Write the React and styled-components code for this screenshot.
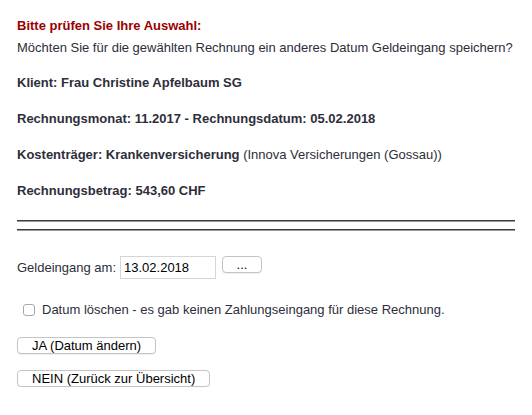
import React from "react";
import styled, { createGlobalStyle } from "styled-components";

const GlobalStyle = createGlobalStyle`
  html, body {
    margin: 0;
    padding: 0;
    background: #fff;
  }
  body {
    font-family: "Liberation Sans", Arial, Helvetica, sans-serif;
    font-size: 13px;
    color: #2e2e3a;
  }
`;

const Page = styled.div`
  padding: 18px 17px 0 17px;
  display: flex;
  flex-direction: column;
`;

const Title = styled.div`
  color: #990000;
  font-weight: bold;
  line-height: 16px;
`;

const Text = styled.div`
  line-height: 16px;
  margin-top: ${(p) => p.$top || 0}px;
  font-weight: ${(p) => (p.$bold ? "bold" : "normal")};
  b {
    font-weight: bold;
  }
`;

const Rule = styled.div`
  height: 1px;
  background: #3c3c3c;
  border-bottom: 1px solid #9a9a9a;
  margin-top: ${(p) => p.$top}px;
`;

const Row = styled.div`
  display: flex;
  align-items: center;
  gap: ${(p) => p.$gap || 4}px;
  margin-top: ${(p) => p.$top || 0}px;
  padding-left: ${(p) => p.$indent || 0}px;
  line-height: 16px;
`;

const DateInput = styled.input`
  width: 96px;
  height: 23px;
  box-sizing: border-box;
  border: 1px solid #d6d6d6;
  padding: 0 3px;
  font-family: inherit;
  font-size: 13px;
  color: #000;
  outline: none;
`;

const Button = styled.button`
  appearance: none;
  height: 17px;
  box-sizing: border-box;
  padding: 0 14px;
  background: #fff;
  border: 1px solid #c4c4c4;
  border-radius: 4px;
  box-shadow: 0 1px 0 rgba(0, 0, 0, 0.06);
  font-family: inherit;
  font-size: 13px;
  line-height: 15px;
  color: #000;
  cursor: pointer;
  margin-top: ${(p) => p.$top || 0}px;
  align-self: flex-start;
`;

const SmallButton = styled(Button)`
  width: 40px;
  padding: 0;
  margin-left: 2px;
  line-height: 13px;
`;

const Check = styled.input`
  appearance: none;
  margin: 0;
  width: 12px;
  height: 12px;
  box-sizing: border-box;
  border: 1px solid #a8a8a8;
  border-radius: 3px;
  background: #fff;
`;

export default function App() {
  return (
    <>
      <GlobalStyle />
      <Page>
        <Title>Bitte prüfen Sie Ihre Auswahl:</Title>
        <Text $top={6}>
          Möchten Sie für die gewählten Rechnung ein anderes Datum Geldeingang speichern?
        </Text>
        <Text $top={19} $bold>
          Klient: Frau Christine Apfelbaum SG
        </Text>
        <Text $top={20} $bold>
          Rechnungsmonat: 11.2017 - Rechnungsdatum: 05.02.2018
        </Text>
        <Text $top={20}>
          <b>Kostenträger: Krankenversicherung</b> (Innova Versicherungen (Gossau))
        </Text>
        <Text $top={20} $bold>
          Rechnungsbetrag: 543,60 CHF
        </Text>
        <Rule $top={21} />
        <Rule $top={7} />
        <Row $top={25} $gap={4}>
          <span>Geldeingang am:</span>
          <DateInput defaultValue="13.02.2018" />
          <SmallButton>...</SmallButton>
        </Row>
        <Row $top={23} $gap={7} $indent={6}>
          <Check type="checkbox" />
          <span>Datum löschen - es gab keinen Zahlungseingang für diese Rechnung.</span>
        </Row>
        <Button $top={19}>JA (Datum ändern)</Button>
        <Button $top={16}>NEIN (Zurück zur Übersicht)</Button>
      </Page>
    </>
  );
}
